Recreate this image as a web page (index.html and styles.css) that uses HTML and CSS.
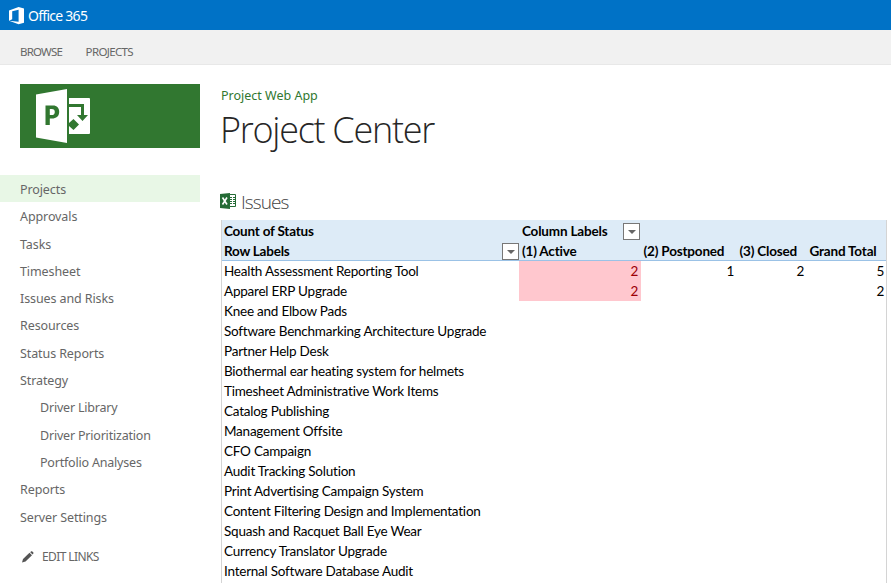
FILE: index.html
```html
<!DOCTYPE html>
<html lang="en">
<head>
<meta charset="utf-8">
<title>Project Center</title>
<link rel="stylesheet" href="styles.css">
</head>
<body>
<header class="suite">
  <svg class="office" width="16" height="18" viewBox="0 0 16 18"><path fill="#fff" fill-rule="evenodd" d="M0 3.4 9.6 0 15 1.5V15.7L9.6 17.2 0 13.8 9.6 14.8V2.8L3.2 4.3V12.3L0 13.8Z"/></svg>
  <span class="brand">Office 365</span>
</header>
<nav class="ribbon"><a class="tab browse">BROWSE</a><a class="tab">PROJECTS</a></nav>
<div class="page">
  <aside class="side">
    <div class="logo">
      <svg width="180" height="64" viewBox="0 0 180 64"><path fill="#fff" d="M16 10.5 47 5V59L16 53.5Z"/><path fill="#317730" fill-rule="evenodd" d="M25.5 21.5H33C37 21.5 39.2 24 39.2 27.8 39.2 32.3 36.2 34.6 32 34.6H29.8V41H25.5ZM29.8 25V31.1H31.7C33.8 31.1 34.8 30 34.8 28 34.8 26 33.8 25 31.8 25Z"/><path fill="#fff" d="M49 14H69Q70 14 70 15V49Q70 50 69 50H49V42L53.5 46 59 40.5 53.5 35 49 39V23H61V31H57L62.5 37 68 31H64V20H49Z"/></svg>
    </div>
    <nav class="links">
      <a class="link on">Projects</a><a class="link">Approvals</a><a class="link">Tasks</a><a class="link">Timesheet</a><a class="link">Issues and Risks</a><a class="link">Resources</a><a class="link">Status Reports</a><a class="link">Strategy</a><a class="link sub">Driver Library</a><a class="link sub">Driver Prioritization</a><a class="link sub">Portfolio Analyses</a><a class="link">Reports</a><a class="link">Server Settings</a>
    </nav>
    <a class="edit"><svg width="12" height="12" viewBox="0 0 12 12"><path fill="#555" d="M0 11.5 1 8 7.5 1.8 10 4.2 3.5 10.4ZM8.2 1.2 9.2.3Q10 0 11 .9 11.8 1.8 11.4 2.6L10.6 3.5Z"/></svg><span>EDIT LINKS</span></a>
  </aside>
  <main class="main">
    <a class="crumb">Project Web App</a>
    <h1>Project Center</h1>
    <div class="part">
      <svg width="16" height="16" viewBox="0 0 16 16"><path fill="#246b35" d="M0 1 10 0V16L0 15Z"/><path fill="#fff" stroke="#246b35" d="M9.5 1.5h6v12h-6z"/><path stroke="#246b35" stroke-dasharray="2 1" d="M10 4.5h5M10 6.5h5M10 8.5h5M10 10.5h5"/><path stroke="#fff" stroke-width="1.6" d="M2.5 4.5 7 11.5M7 4.5 2.5 11.5"/></svg>
      <h2>Issues</h2>
    </div>
    <table class="pivot">
      <colgroup><col class="c1"><col class="c2"><col class="c3"><col class="c4"><col class="c5"></colgroup>
      <thead>
        <tr><th>Count of Status</th><th colspan="4"><div class="head"><span class="collabel">Column Labels</span><i class="drop"></i></div></th></tr>
        <tr class="last"><th><div class="head"><span class="rowlabel">Row Labels</span><i class="drop end"></i></div></th><th>(1) Active</th><th>(2) Postponed</th><th>(3) Closed</th><th>Grand Total</th></tr>
      </thead>
      <tbody>
        <tr><td>Health Assessment Reporting Tool</td><td class="bad">2</td><td>1</td><td>2</td><td>5</td></tr>
        <tr><td>Apparel ERP Upgrade</td><td class="bad">2</td><td></td><td></td><td>2</td></tr>
        <tr><td>Knee and Elbow Pads</td></tr>
        <tr><td>Software Benchmarking Architecture Upgrade</td></tr>
        <tr><td>Partner Help Desk</td></tr>
        <tr><td>Biothermal ear heating system for helmets</td></tr>
        <tr><td>Timesheet Administrative Work Items</td></tr>
        <tr><td>Catalog Publishing</td></tr>
        <tr><td>Management Offsite</td></tr>
        <tr><td>CFO Campaign</td></tr>
        <tr><td>Audit Tracking Solution</td></tr>
        <tr><td>Print Advertising Campaign System</td></tr>
        <tr><td>Content Filtering Design and Implementation</td></tr>
        <tr><td>Squash and Racquet Ball Eye Wear</td></tr>
        <tr><td>Currency Translator Upgrade</td></tr>
        <tr><td>Internal Software Database Audit</td></tr>
        <tr><td></td></tr>
      </tbody>
    </table>
  </main>
</div>
</body>
</html>
```
FILE: styles.css
```css
* { box-sizing: border-box; }
body { margin: 0; height: 583px; overflow: hidden; background: #fff; font: 13px/20px "Noto Sans", "Open Sans", sans-serif; color: #666; }
h1, h2 { margin: 0; font-weight: 300; font-family: "Open Sans", sans-serif; }
svg { display: block; flex: none; }
.suite { height: 30px; background: #0072c6; display: flex; align-items: center; padding-left: 9px; gap: 3px; }
.office { margin-top: 1px; }
.brand { color: #fff; font-size: 14px; letter-spacing: -.73px; padding-top: 1px; }
.ribbon { height: 35px; background: #f1f1f1; border-bottom: 1px solid #e8e8e8; padding: 12px 0 0 20px; display: flex; gap: 23.5px; font-size: 11.5px; letter-spacing: -.8px; }
.tab + .tab { letter-spacing: -.65px; }
.page { display: flex; }
.side { width: 200px; padding-top: 19px; flex: none; }
.logo { margin-left: 20px; height: 64px; background: #317730; }
.links { margin-top: 27px; }
.link { display: block; height: 27.3px; padding-left: 20px; line-height: 29px; font-size: 12.5px; letter-spacing: -.1px; white-space: nowrap; }
.on { background: #e8f7e6; }
.sub { padding-left: 40px; letter-spacing: -.2px; }
.edit { display: flex; align-items: center; gap: 8px; margin: 17px 0 0 22px; font-size: 12px; letter-spacing: -.6px; }
.main { padding: 21px 0 0 20px; width: 687px; flex: none; }
.crumb { display: block; padding-left: 1px; color: #317730; font-size: 12.5px; line-height: 20px; }
h1 { color: #262626; font-size: 36px; line-height: 48px; letter-spacing: -1.28px; }
.part { display: flex; align-items: center; gap: 5px; height: 28px; margin-top: 34px; }
.part svg { margin-bottom: 3px; }
h2 { color: #444; font-size: 19px; line-height: 28px; letter-spacing: -.95px; margin-bottom: 1px; }
.pivot { width: 666px; margin: 4px 0 0 1px; table-layout: fixed; border-collapse: separate; border-spacing: 0; border: solid #d4d4d4; border-width: 0 1px; font: 13.5px/20px Lato, sans-serif; letter-spacing: -.23px; color: #000; }
.c1 { width: 297px; } .c2 { width: 122px; } .c3 { width: 96px; } .c4 { width: 70px; } .c5 { width: 79px; }
th, td { height: 20px; padding: 0 3px 0 2px; white-space: nowrap; text-align: right; }
td:last-child { padding-right: 2px; }
th { background: #ddebf7; text-align: left; font-weight: 700; padding: 3px 0 0 3px; height: 20px; line-height: 17px; letter-spacing: -.18px; }
th:nth-child(n+3) { padding-left: 2.5px; }
th:first-child { padding-left: 2px; letter-spacing: -.22px; }
.last th { height: 21px; border-bottom: 1px solid #9bc2e6; }
td:first-child { text-align: left; padding-right: 0; }
.bad { background: #ffc7ce; color: #9c0006; }
.head { display: flex; align-items: center; height: 17px; }
.drop { width: 17px; height: 17px; border: 1px solid #777; background: #fff; display: flex; align-items: center; justify-content: center; margin-left: 15px; }
.drop::after { content: ""; border: 4px solid transparent; border-top-color: #666; border-bottom: 0; }
.collabel { width: 86px; }
.end { margin-left: auto; }
```
